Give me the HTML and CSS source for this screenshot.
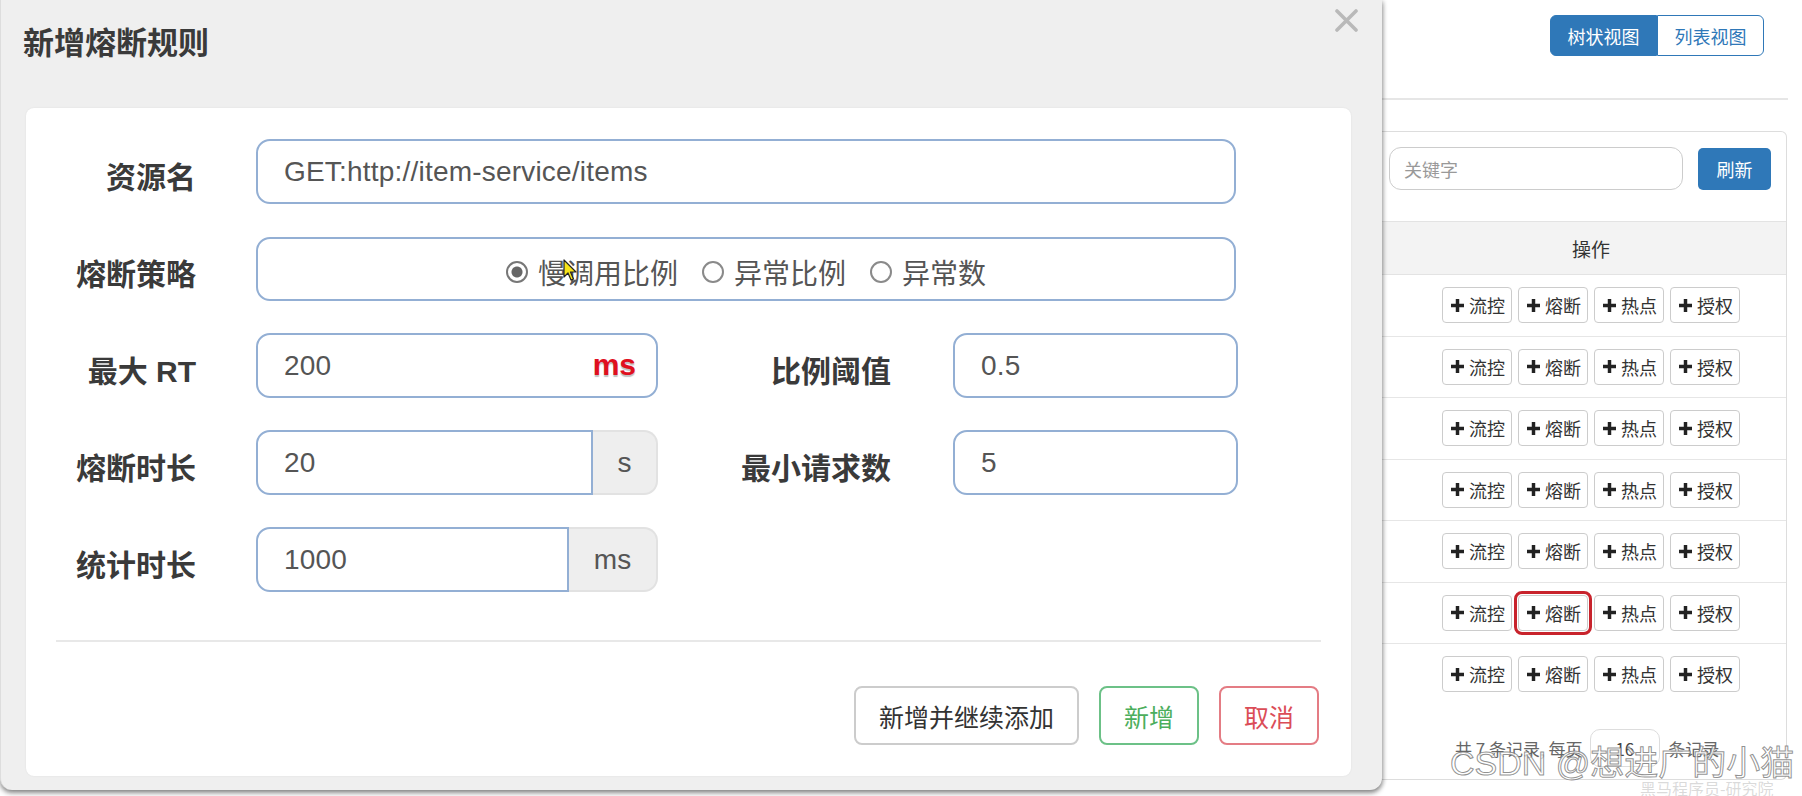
FILE: index.html
```html
<!DOCTYPE html>
<html lang="zh-CN">
<head>
    <meta charset="UTF-8">
    <meta name="viewport" content="width=device-width, initial-scale=1.0">
    <title>新增熔断规则</title>
    <link rel="stylesheet" href="styles.css">
</head>
<body>
<div class="screen">
    <div class="modal">
        <div class="modal-header">
            <h4 class="modal-title">新增熔断规则</h4>
            <span class="close">
                <svg width="23" height="23" viewBox="0 0 23 23"><path d="M2 2L21 21M21 2L2 21" stroke="#b9b9b9" stroke-width="3.6" stroke-linecap="round"/></svg>
            </span>
        </div>
        <div class="modal-body">
            <form class="rule-form">
                <div class="form-row">
                    <label class="form-label">资源名</label>
                    <input class="form-control w-full" type="text" value="GET:http://item-service/items">
                </div>
                <div class="form-row">
                    <label class="form-label">熔断策略</label>
                    <div class="form-control w-full radio-box">
                        <span class="radio"><span class="dot checked"></span>慢调用比例</span>
                        <span class="radio"><span class="dot"></span>异常比例</span>
                        <span class="radio"><span class="dot"></span>异常数</span>
                    </div>
                </div>
                <div class="form-row">
                    <label class="form-label">最大 RT</label>
                    <div class="field w-left">
                        <input class="form-control" type="text" value="200">
                        <span class="unit-hint">ms</span>
                    </div>
                    <label class="form-label label-right">比例阈值</label>
                    <input class="form-control w-right" type="text" value="0.5">
                </div>
                <div class="form-row">
                    <label class="form-label">熔断时长</label>
                    <div class="input-group w-left">
                        <input class="form-control" type="text" value="20">
                        <span class="input-addon addon-s">s</span>
                    </div>
                    <label class="form-label label-right">最小请求数</label>
                    <input class="form-control w-right" type="text" value="5">
                </div>
                <div class="form-row">
                    <label class="form-label">统计时长</label>
                    <div class="input-group w-left">
                        <input class="form-control" type="text" value="1000">
                        <span class="input-addon addon-ms">ms</span>
                    </div>
                </div>
            </form>
            <div class="divider"></div>
            <div class="modal-footer">
                <button class="btn btn-default">新增并继续添加</button>
                <button class="btn btn-success">新增</button>
                <button class="btn btn-danger">取消</button>
            </div>
        </div>
        <svg class="cursor" width="14" height="22" viewBox="0 0 14 22"><path d="M1 1V18L5 14L8 21L10.5 20L7.5 13H13Z" fill="#f5e31a" stroke="#222" stroke-width="1.2" stroke-linejoin="round"/></svg>
    </div>

    <div class="page">
        <div class="page-head">
            <div class="btn-group">
                <button class="toggle active">树状视图</button>
                <button class="toggle">列表视图</button>
            </div>
        </div>
        <div class="panel">
            <div class="search-bar">
                <input class="search-input" type="text" placeholder="关键字">
                <button class="btn-refresh">刷新</button>
            </div>
            <table class="rules">
                <thead>
                    <tr><th>操作</th></tr>
                </thead>
                <tbody>
                    <tr><td><div class="ops">
                        <button class="op"><svg class="plus" viewBox="0 0 12 12"><path d="M4.4 0h3.2v4.4H12v3.2H7.6V12H4.4V7.6H0V4.4h4.4z"/></svg>流控</button>
                        <button class="op"><svg class="plus" viewBox="0 0 12 12"><path d="M4.4 0h3.2v4.4H12v3.2H7.6V12H4.4V7.6H0V4.4h4.4z"/></svg>熔断</button>
                        <button class="op"><svg class="plus" viewBox="0 0 12 12"><path d="M4.4 0h3.2v4.4H12v3.2H7.6V12H4.4V7.6H0V4.4h4.4z"/></svg>热点</button>
                        <button class="op"><svg class="plus" viewBox="0 0 12 12"><path d="M4.4 0h3.2v4.4H12v3.2H7.6V12H4.4V7.6H0V4.4h4.4z"/></svg>授权</button>
                    </div></td></tr>
                    <tr><td><div class="ops">
                        <button class="op"><svg class="plus" viewBox="0 0 12 12"><path d="M4.4 0h3.2v4.4H12v3.2H7.6V12H4.4V7.6H0V4.4h4.4z"/></svg>流控</button>
                        <button class="op"><svg class="plus" viewBox="0 0 12 12"><path d="M4.4 0h3.2v4.4H12v3.2H7.6V12H4.4V7.6H0V4.4h4.4z"/></svg>熔断</button>
                        <button class="op"><svg class="plus" viewBox="0 0 12 12"><path d="M4.4 0h3.2v4.4H12v3.2H7.6V12H4.4V7.6H0V4.4h4.4z"/></svg>热点</button>
                        <button class="op"><svg class="plus" viewBox="0 0 12 12"><path d="M4.4 0h3.2v4.4H12v3.2H7.6V12H4.4V7.6H0V4.4h4.4z"/></svg>授权</button>
                    </div></td></tr>
                    <tr><td><div class="ops">
                        <button class="op"><svg class="plus" viewBox="0 0 12 12"><path d="M4.4 0h3.2v4.4H12v3.2H7.6V12H4.4V7.6H0V4.4h4.4z"/></svg>流控</button>
                        <button class="op"><svg class="plus" viewBox="0 0 12 12"><path d="M4.4 0h3.2v4.4H12v3.2H7.6V12H4.4V7.6H0V4.4h4.4z"/></svg>熔断</button>
                        <button class="op"><svg class="plus" viewBox="0 0 12 12"><path d="M4.4 0h3.2v4.4H12v3.2H7.6V12H4.4V7.6H0V4.4h4.4z"/></svg>热点</button>
                        <button class="op"><svg class="plus" viewBox="0 0 12 12"><path d="M4.4 0h3.2v4.4H12v3.2H7.6V12H4.4V7.6H0V4.4h4.4z"/></svg>授权</button>
                    </div></td></tr>
                    <tr><td><div class="ops">
                        <button class="op"><svg class="plus" viewBox="0 0 12 12"><path d="M4.4 0h3.2v4.4H12v3.2H7.6V12H4.4V7.6H0V4.4h4.4z"/></svg>流控</button>
                        <button class="op"><svg class="plus" viewBox="0 0 12 12"><path d="M4.4 0h3.2v4.4H12v3.2H7.6V12H4.4V7.6H0V4.4h4.4z"/></svg>熔断</button>
                        <button class="op"><svg class="plus" viewBox="0 0 12 12"><path d="M4.4 0h3.2v4.4H12v3.2H7.6V12H4.4V7.6H0V4.4h4.4z"/></svg>热点</button>
                        <button class="op"><svg class="plus" viewBox="0 0 12 12"><path d="M4.4 0h3.2v4.4H12v3.2H7.6V12H4.4V7.6H0V4.4h4.4z"/></svg>授权</button>
                    </div></td></tr>
                    <tr><td><div class="ops">
                        <button class="op"><svg class="plus" viewBox="0 0 12 12"><path d="M4.4 0h3.2v4.4H12v3.2H7.6V12H4.4V7.6H0V4.4h4.4z"/></svg>流控</button>
                        <button class="op"><svg class="plus" viewBox="0 0 12 12"><path d="M4.4 0h3.2v4.4H12v3.2H7.6V12H4.4V7.6H0V4.4h4.4z"/></svg>熔断</button>
                        <button class="op"><svg class="plus" viewBox="0 0 12 12"><path d="M4.4 0h3.2v4.4H12v3.2H7.6V12H4.4V7.6H0V4.4h4.4z"/></svg>热点</button>
                        <button class="op"><svg class="plus" viewBox="0 0 12 12"><path d="M4.4 0h3.2v4.4H12v3.2H7.6V12H4.4V7.6H0V4.4h4.4z"/></svg>授权</button>
                    </div></td></tr>
                    <tr><td><div class="ops">
                        <button class="op"><svg class="plus" viewBox="0 0 12 12"><path d="M4.4 0h3.2v4.4H12v3.2H7.6V12H4.4V7.6H0V4.4h4.4z"/></svg>流控</button>
                        <button class="op marked"><svg class="plus" viewBox="0 0 12 12"><path d="M4.4 0h3.2v4.4H12v3.2H7.6V12H4.4V7.6H0V4.4h4.4z"/></svg>熔断</button>
                        <button class="op"><svg class="plus" viewBox="0 0 12 12"><path d="M4.4 0h3.2v4.4H12v3.2H7.6V12H4.4V7.6H0V4.4h4.4z"/></svg>热点</button>
                        <button class="op"><svg class="plus" viewBox="0 0 12 12"><path d="M4.4 0h3.2v4.4H12v3.2H7.6V12H4.4V7.6H0V4.4h4.4z"/></svg>授权</button>
                    </div></td></tr>
                    <tr><td><div class="ops">
                        <button class="op"><svg class="plus" viewBox="0 0 12 12"><path d="M4.4 0h3.2v4.4H12v3.2H7.6V12H4.4V7.6H0V4.4h4.4z"/></svg>流控</button>
                        <button class="op"><svg class="plus" viewBox="0 0 12 12"><path d="M4.4 0h3.2v4.4H12v3.2H7.6V12H4.4V7.6H0V4.4h4.4z"/></svg>熔断</button>
                        <button class="op"><svg class="plus" viewBox="0 0 12 12"><path d="M4.4 0h3.2v4.4H12v3.2H7.6V12H4.4V7.6H0V4.4h4.4z"/></svg>热点</button>
                        <button class="op"><svg class="plus" viewBox="0 0 12 12"><path d="M4.4 0h3.2v4.4H12v3.2H7.6V12H4.4V7.6H0V4.4h4.4z"/></svg>授权</button>
                    </div></td></tr>
                </tbody>
            </table>
            <div class="pager">共 7 条记录, 每页 <span class="page-size">16</span> 条记录</div>
        </div>
        <div class="watermark">CSDN @想进广的小猫</div>
        <div class="watermark-sub">黑马程序员-研究院</div>
    </div>
</div>
</body>
</html>
```

FILE: styles.css
```css
body {
    margin: 0;
    font-family: "Liberation Sans", Arial, "Noto Sans CJK SC", sans-serif;
    background-color: #fff;
    overflow: hidden;
}
.screen {
    display: flex;
    height: 796px;
}

/* modal */
.modal {
    position: relative;
    z-index: 2;
    flex: none;
    width: 1382px;
    height: 790px;
    box-sizing: border-box;
    padding: 0 31px 14px 25px;
    display: flex;
    flex-direction: column;
    background-color: #efefef;
    border-left: 1px solid #ddd;
    border-radius: 0 0 12px 12px;
    box-shadow: 0 3px 5px rgba(0, 0, 0, 0.45), 2px 0 4px rgba(0, 0, 0, 0.12);
}
.modal-header {
    height: 109px;
    display: flex;
    justify-content: space-between;
    align-items: flex-start;
}
.modal-title {
    margin: 26px 0 0 -3px;
    font-size: 31px;
    line-height: 36px;
    font-weight: bold;
    color: #3a3a3a;
}
.close {
    margin: 9px -7px 0 0;
    line-height: 0;
}
.modal-body {
    flex: 1;
    padding: 31px 30px 31px 30px;
    background-color: #fff;
    border-radius: 8px;
    box-shadow: 0 0 2px rgba(0, 0, 0, 0.08);
}
.cursor {
    position: absolute;
    left: 562px;
    top: 259px;
}

/* form */
.form-row {
    display: flex;
    align-items: center;
    height: 65px;
    margin-bottom: 32px;
}
.form-row:last-child {
    margin-bottom: 0;
}
.form-label {
    flex: none;
    width: 140px;
    margin: 6px 60px 0 0;
    text-align: right;
    font-size: 30px;
    font-weight: bold;
    color: #3a3a3a;
}
.label-right {
    width: 233px;
    margin-right: 62px;
}
.form-control {
    box-sizing: border-box;
    height: 65px;
    padding: 0 26px;
    border: 2px solid #93afd4;
    border-radius: 14px;
    font-family: inherit;
    font-size: 28px;
    letter-spacing: 0.2px;
    color: #555;
    background-color: #fff;
    outline: none;
}
.w-full {
    width: 980px;
}
.w-left {
    width: 402px;
    flex: none;
}
.w-right {
    width: 285px;
}
.field {
    position: relative;
}
.field .form-control {
    width: 100%;
}
.unit-hint {
    position: absolute;
    right: 22px;
    top: 15px;
    font-size: 30px;
    font-weight: bold;
    color: #e0101e;
    text-shadow: 0 2px 1px rgba(0, 0, 0, 0.25);
}
.radio-box {
    display: flex;
    justify-content: center;
    align-items: center;
    gap: 24px;
    height: 64px;
    font-family: "Noto Sans CJK SC", sans-serif;
    font-size: 28px;
    letter-spacing: 0;
    color: #555;
}
.radio {
    display: flex;
    align-items: center;
    gap: 10px;
    margin-top: 6px;
}
.dot {
    width: 22px;
    height: 22px;
    border: 2px solid #8a8a8a;
    border-radius: 50%;
    box-sizing: border-box;
    background-color: #fff;
}
.dot.checked {
    border-color: #777;
    background: radial-gradient(circle, #666 0, #666 5px, #fff 6px);
}
.input-group {
    display: flex;
    height: 65px;
}
.input-group .form-control {
    flex: 1;
    min-width: 0;
    border-radius: 14px 0 0 14px;
}
.input-addon {
    flex: none;
    box-sizing: border-box;
    display: flex;
    align-items: center;
    justify-content: center;
    background-color: #eee;
    border: 2px solid #e2e2e2;
    border-left: none;
    border-radius: 0 14px 14px 0;
    font-size: 28px;
    color: #555;
}
.addon-s {
    width: 65px;
}
.addon-ms {
    width: 89px;
}
.divider {
    height: 2px;
    margin: 48px 0 44px;
    background-color: #e8e8e8;
}
.modal-footer {
    display: flex;
    justify-content: flex-end;
    gap: 20px;
    margin-right: 2px;
}
.btn {
    height: 59px;
    padding: 0 23px;
    border: 2px solid #ccc;
    border-radius: 8px;
    background-color: #fff;
    font-family: "Noto Sans CJK SC", sans-serif;
    font-size: 25px;
    color: #333;
}
.btn-success {
    border-color: #6cc187;
    color: #4cae5c;
}
.btn-danger {
    border-color: #e47c84;
    color: #db4d57;
}

/* page behind modal */
.page {
    position: relative;
    flex: 1;
    background-color: #fff;
}
.page-head {
    height: 100px;
    margin-right: 14px;
    box-sizing: border-box;
    padding: 15px 24px 0 0;
    display: flex;
    justify-content: flex-end;
    align-items: flex-start;
    border-bottom: 2px solid #e6e6e6;
}
.btn-group {
    display: flex;
}
.toggle {
    height: 41px;
    width: 107px;
    border: 1px solid #2f78b8;
    background-color: #fff;
    color: #2f78b8;
    font-family: "Noto Sans CJK SC", sans-serif;
    font-size: 18px;
    border-radius: 0 6px 6px 0;
}
.toggle.active {
    background-color: #2f78b8;
    color: #fff;
    border-radius: 6px 0 0 6px;
}
.panel {
    position: relative;
    height: 647px;
    margin: 31px 15px 0 0;
    border: 1px solid #ddd;
    border-left: none;
    border-radius: 0 6px 6px 0;
}
.search-bar {
    display: flex;
    align-items: center;
    gap: 15px;
    padding: 15px 0 0 7px;
}
.search-input {
    box-sizing: border-box;
    width: 294px;
    height: 43px;
    padding: 0 14px;
    border: 1px solid #ccc;
    border-radius: 12px;
    font-family: "Noto Sans CJK SC", sans-serif;
    font-size: 18px;
    outline: none;
}
.search-input::placeholder {
    color: #999;
}
.btn-refresh {
    width: 73px;
    height: 42px;
    border: none;
    border-radius: 5px;
    background-color: #2f78b8;
    color: #fff;
    font-family: "Noto Sans CJK SC", sans-serif;
    font-size: 18px;
}
.rules {
    width: 100%;
    margin-top: 31px;
    border-collapse: collapse;
}
.rules th {
    height: 52px;
    padding: 0 0 0 14px;
    background-color: #f3f3f3;
    border-top: 1px solid #e3e3e3;
    border-bottom: 1px solid #e3e3e3;
    font-family: "Noto Sans CJK SC", sans-serif;
    font-size: 19px;
    font-weight: normal;
    color: #333;
}
.rules td {
    height: 60.5px;
    padding: 0 0 0 14px;
    border-bottom: 1px solid #e6e6e6;
    text-align: center;
}
.rules tr:last-child td {
    border-bottom: none;
}
.ops {
    display: inline-flex;
    gap: 6px;
    vertical-align: middle;
}
.op {
    display: flex;
    align-items: center;
    gap: 5px;
    width: 70px;
    height: 36px;
    padding: 0 0 0 8px;
    border: 1px solid #ccc;
    border-radius: 4px;
    background-color: #fff;
    font-family: "Noto Sans CJK SC", sans-serif;
    font-size: 18px;
    color: #333;
}
.op.marked {
    outline: 3px solid #c8232c;
    outline-offset: 1px;
}
.plus {
    width: 13px;
    height: 13px;
    fill: #222;
}
.pager {
    margin: 24px 0 0 73px;
    font-family: "Noto Sans CJK SC", sans-serif;
    font-size: 17px;
    color: #666;
}
.page-size {
    display: inline-block;
    width: 70px;
    height: 38px;
    line-height: 38px;
    margin: 0 4px;
    padding-left: 24px;
    box-sizing: border-box;
    border: 1px solid #ddd;
    border-radius: 10px;
    color: #444;
}
.watermark {
    position: absolute;
    left: 68px;
    bottom: 16px;
    font-size: 34px;
    line-height: 1;
    white-space: nowrap;
    color: rgba(255, 255, 255, 0.75);
    -webkit-text-stroke: 1px rgba(110, 110, 110, 0.75);
}
.watermark-sub {
    position: absolute;
    left: 258px;
    bottom: -4px;
    font-family: "Noto Sans CJK SC", sans-serif;
    font-size: 16px;
    color: rgba(150, 150, 150, 0.35);
    white-space: nowrap;
}
```
